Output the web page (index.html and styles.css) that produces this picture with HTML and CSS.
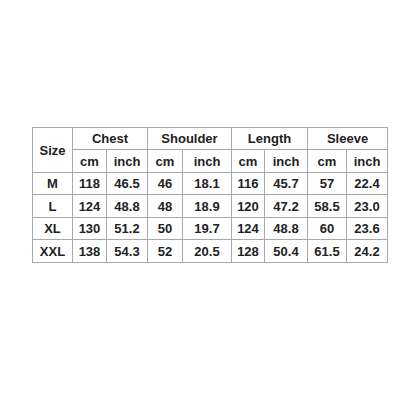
FILE: index.html
```html
<!DOCTYPE html>
<html>
<head>
<meta charset="utf-8">
<link rel="stylesheet" href="styles.css">
</head>
<body>
<div class="page">
<table class="sizes">
<colgroup>
<col class="c1"><col class="c2"><col class="c3"><col class="c4"><col class="c5"><col class="c6"><col class="c7"><col class="c8"><col class="c9">
</colgroup>
<tr><td rowspan="2">Size</td><td colspan="2">Chest</td><td colspan="2">Shoulder</td><td colspan="2">Length</td><td colspan="2">Sleeve</td></tr>
<tr><td>cm</td><td>inch</td><td>cm</td><td>inch</td><td>cm</td><td>inch</td><td>cm</td><td>inch</td></tr>
<tr><td>M</td><td>118</td><td>46.5</td><td>46</td><td>18.1</td><td>116</td><td>45.7</td><td>57</td><td>22.4</td></tr>
<tr><td>L</td><td>124</td><td>48.8</td><td>48</td><td>18.9</td><td>120</td><td>47.2</td><td>58.5</td><td>23.0</td></tr>
<tr><td>XL</td><td>130</td><td>51.2</td><td>50</td><td>19.7</td><td>124</td><td>48.8</td><td>60</td><td>23.6</td></tr>
<tr><td>XXL</td><td>138</td><td>54.3</td><td>52</td><td>20.5</td><td>128</td><td>50.4</td><td>61.5</td><td>24.2</td></tr>
</table>
</div>
</body>
</html>
```
FILE: styles.css
```css
html, body { margin: 0; padding: 0; background: #fff; }
.page { width: 416px; height: 416px; padding: 127px 0 0 32px; box-sizing: border-box; }
.sizes {
  border-collapse: collapse;
  table-layout: fixed;
  width: 356px;
  font-family: "Liberation Sans", Arial, sans-serif;
  font-weight: bold;
  font-size: 13px;
  color: #222;
}
.sizes td {
  border: 1px solid #a8a8a8;
  text-align: center;
  vertical-align: middle;
  padding: 0;
  height: 21px;
  line-height: 15px;
}
.sizes tr:nth-child(2) td, .sizes tr:nth-child(4) td, .sizes tr:nth-child(6) td { height: 22px; }
.c1 { width: 40px; } .c2 { width: 34px; } .c3 { width: 41px; } .c4 { width: 35px; }
.c5 { width: 49px; } .c6 { width: 33px; } .c7 { width: 43px; } .c8 { width: 39px; } .c9 { width: 41px; }
```
